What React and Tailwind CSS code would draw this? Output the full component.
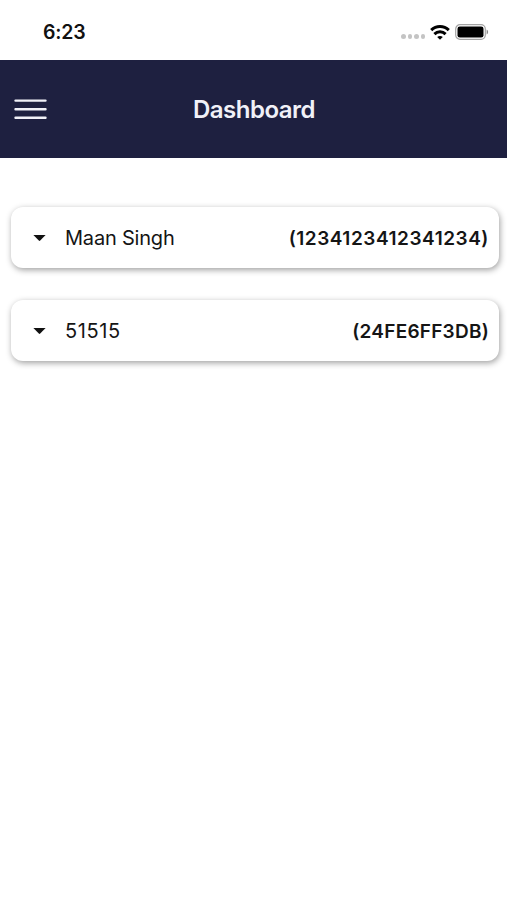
const accounts = [
  { name: "Maan Singh", code: "(1234123412341234)", nameClass: "tracking-[-0.2px]", codeClass: "tracking-[0.53px]" },
  { name: "51515", code: "(24FE6FF3DB)", nameClass: "tracking-[0.6px]", codeClass: "tracking-[0.24px]" },
]

function StatusBar() {
  return (
    <div className="flex h-[60px] items-center justify-between pl-[43px] pr-[18px] pt-1">
      <span className="pt-0.5 text-[19.5px] font-semibold leading-none tracking-[-0.2px] text-[#111]">6:23</span>

      <div className="flex items-center">
        {/* No signal */}
        <div className="mr-[5px] mt-[9px] flex gap-[2px]">
          <span className="h-[4.5px] w-[4.5px] rounded-full bg-[#c4c4c4]" />
          <span className="h-[4.5px] w-[4.5px] rounded-full bg-[#c4c4c4]" />
          <span className="h-[4.5px] w-[4.5px] rounded-full bg-[#c4c4c4]" />
          <span className="h-[4.5px] w-[4.5px] rounded-full bg-[#c4c4c4]" />
        </div>

        {/* Wifi */}
        <svg className="mr-[5px] h-[15px] w-5" viewBox="0 0 20 15" fill="none" stroke="#000" strokeWidth="3">
          <path d="M1.2 5.2C6.2.4 13.8.4 18.8 5.2" />
          <path d="M4.4 9.1c3.1-3 8.1-3 11.2 0" />
          <path d="M10 14.8 7.2 12c1.5-1.4 4.1-1.4 5.6 0Z" fill="#000" stroke="none" />
        </svg>

        {/* Battery */}
        <svg className="h-4 w-[34px]" viewBox="0 0 34 16">
          <rect x="0.7" y="0.7" width="29.6" height="14.6" rx="4.3" fill="none" stroke="#a3a3a3" strokeWidth="1.2" />
          <rect x="2.5" y="2.4" width="26" height="11.2" rx="2.3" fill="#000" />
          <path d="M31.6 5.5c2 .8 2 4.2 0 5Z" fill="#8a8a8a" />
        </svg>
      </div>
    </div>
  )
}

function Header() {
  return (
    <header className="grid h-[98px] grid-cols-[1fr_auto_1fr] items-center bg-[#1e2040] px-[14px]">
      <button aria-label="Menu" className="w-[33px]">
        <svg className="h-[22px] w-[33px]" viewBox="0 0 33 22" stroke="#f1f1f8" strokeWidth="2.4" strokeLinecap="round">
          <path d="M1.5 2.6h30M1.5 11.2h30M1.5 19.8h30" />
        </svg>
      </button>
      <h1 className="pl-px pt-0.5 text-[24px] font-semibold tracking-[-0.5px] text-[#f1f1f8]">Dashboard</h1>
    </header>
  )
}

function AccountCard({ account }) {
  return (
    <button className="flex h-[61px] w-full items-center rounded-xl bg-white pl-[22px] pr-[10px] text-[#151515] shadow-[1px_2px_6px_rgba(0,0,0,0.38)]">
      <svg className="mr-[19px] mt-px h-[6px] w-[13px]" viewBox="0 0 13 6">
        <path d="M.4 0h12.2L7.2 5.6q-.7.6-1.4 0Z" fill="#111" />
      </svg>
      <span className={`text-[20px] ${account.nameClass}`}>{account.name}</span>
      <span className={`ml-auto pt-[3px] text-[19px] font-semibold ${account.codeClass}`}>{account.code}</span>
    </button>
  )
}

export default function App() {
  return (
    <div className="min-h-screen bg-white font-['Inter',sans-serif]">
      <StatusBar />
      <Header />
      <main className="flex flex-col gap-8 pl-[11px] pr-2 pt-[49.4px]">
        {accounts.map((account) => (
          <AccountCard key={account.code} account={account} />
        ))}
      </main>
    </div>
  )
}
